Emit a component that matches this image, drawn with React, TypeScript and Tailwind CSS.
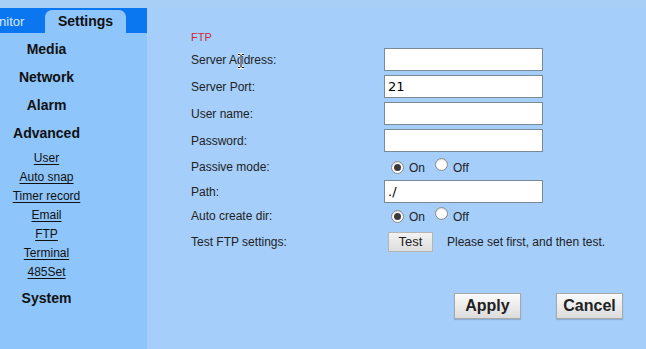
import React from "react";

const Radio = ({ checked }: { checked: boolean }) => (
  <span className="inline-flex h-[13px] w-[13px] items-center justify-center rounded-full border border-[#8a8a8a] bg-white shadow-[inset_0_1px_1px_rgba(0,0,0,0.15)]">
    {checked && <span className="h-[7px] w-[7px] rounded-full bg-[#3a3a3a]" />}
  </span>
);

const RadioPair = () => (
  <div className="flex items-center pl-[7px] text-[12px] text-[#222]">
    <Radio checked />
    <span className="ml-[5px] mt-[2px]">On</span>
    <span className="ml-[10px]"><Radio checked={false} /></span>
    <span className="ml-[5px] mt-[2px]">Off</span>
  </div>
);

const Input = ({ value }: { value?: string }) => (
  <div className="flex h-[23px] w-[159px] items-center border border-[#7b8895] bg-white px-[3px] text-[13px] text-black" style={{ fontFamily: "Tahoma, 'DejaVu Sans', sans-serif" }}>
    {value}
  </div>
);

export default function App() {
  const subs = ["User", "Auto snap", "Timer record", "Email", "FTP", "Terminal", "485Set"];
  const heads = ["Media", "Network", "Alarm", "Advanced"];
  return (
    <div className="relative h-[349px] w-[646px] overflow-hidden bg-[#a5cefb]" style={{ fontFamily: "'Liberation Sans', Arial, sans-serif" }}>
      <div className="h-[8px] w-full bg-[#a8cff6]" />
      <div className="flex h-[341px]">
        <div className="flex w-[147px] flex-col">
          <div className="flex h-[25px] items-end overflow-hidden bg-[#0a77f0]">
            <div className="ml-[-19px] flex h-[23px] w-[64px] items-center text-[13px] text-[#dbe9ff]">Monitor</div>
            <div className="flex h-[23px] w-[81px] items-center justify-center rounded-t-[7px] bg-[#8ec5fa] text-[14px] font-bold text-[#111]">Settings</div>
          </div>
          <div className="flex flex-1 bg-[#8ec5fa]">
            <div className="flex w-[93px] flex-col items-center pt-[2px] text-[#111]">
              {heads.map((h) => (
                <div key={h} className="h-[28px] text-[14px] font-bold leading-[28px]">{h}</div>
              ))}
              <div className="mt-[2px] flex flex-col items-center">
                {subs.map((s) => (
                  <div key={s} className="h-[19px] text-[12px] leading-[19px] underline underline-offset-[2px]">{s}</div>
                ))}
              </div>
              <div className="mt-[2px] h-[28px] text-[14px] font-bold leading-[28px]">System</div>
            </div>
          </div>
        </div>
        <div className="flex-1 pl-[44px] pt-[20px] text-[12px] text-[#222]">
          <div className="h-[18px] text-[11px] leading-[18px] text-[#d0282e]">FTP</div>
          <div className="grid grid-cols-[193px_1fr]">
            {["Server Address:", "Server Port:", "User name:", "Password:"].map((l, i) => (
              <React.Fragment key={l}>
                <div className="flex h-[27px] items-center pt-px">{l}</div>
                <div className="flex h-[27px] items-center"><Input value={i === 1 ? "21" : ""} /></div>
              </React.Fragment>
            ))}
            <div className="flex h-[26px] items-center">Passive mode:</div>
            <div className="flex h-[26px] items-center"><RadioPair /></div>
            <div className="flex h-[23px] items-center">Path:</div>
            <div className="flex h-[23px] items-center"><Input value="./" /></div>
            <div className="flex h-[26px] items-center">Auto create dir:</div>
            <div className="flex h-[26px] items-center"><RadioPair /></div>
            <div className="flex h-[26px] items-center">Test FTP settings:</div>
            <div className="flex h-[26px] items-center">
              <button className="ml-[4px] flex h-[20px] w-[45px] items-center justify-center border border-[#b4b4b4] bg-gradient-to-b from-[#f2f2f2] to-[#dedede] text-[13px] text-[#222]">Test</button>
              <span className="ml-[14px]">Please set first, and then test.</span>
            </div>
          </div>
          <div className="mt-[38px] flex justify-end gap-[35px] pr-[23px]">
            <button className="flex h-[26px] w-[67px] items-center justify-center border border-[#a8a8a8] bg-gradient-to-b from-[#fbfbfb] to-[#dcdcdc] text-[16px] font-bold text-[#222] shadow-[0_1px_1px_rgba(0,0,0,0.15)]">Apply</button>
            <button className="flex h-[26px] w-[67px] items-center justify-center border border-[#a8a8a8] bg-gradient-to-b from-[#fbfbfb] to-[#dcdcdc] text-[16px] font-bold text-[#222] shadow-[0_1px_1px_rgba(0,0,0,0.15)]">Cancel</button>
          </div>
        </div>
      </div>
      <svg className="absolute left-[237px] top-[53px]" width="8" height="16" viewBox="0 0 8 16">
        <path d="M1 1.5h2l1 1 1-1h2M4 2.5v11M1 14.5h2l1-1 1 1h2" fill="none" stroke="#fff" strokeWidth="2.5" />
        <path d="M1 1.5h2l1 1 1-1h2M4 2.5v11M1 14.5h2l1-1 1 1h2" fill="none" stroke="#000" strokeWidth="1" />
      </svg>
    </div>
  );
}
